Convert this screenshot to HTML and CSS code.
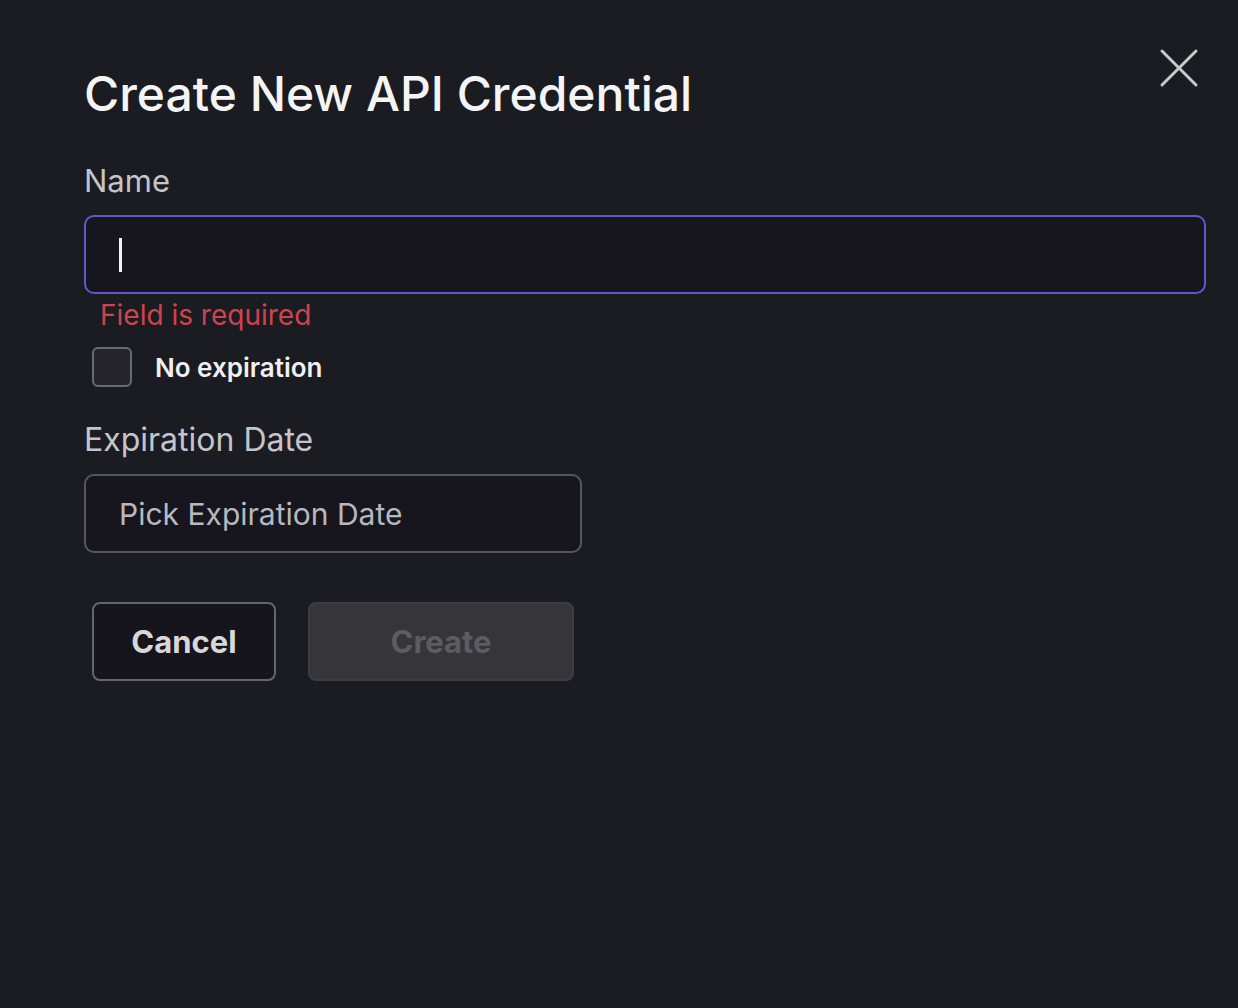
FILE: index.html
```html
<!DOCTYPE html>
<html>
<head>
<meta charset="utf-8">
<link rel="stylesheet" href="styles.css">
</head>
<body>
<div class="dialog">
  <button class="close" aria-label="Close">
    <svg width="40" height="40" viewBox="0 0 40 40"><path d="M3 3 L37 37 M37 3 L3 37" stroke="#c9c9cc" stroke-width="3" stroke-linecap="round" fill="none"/></svg>
  </button>
  <h1 class="title">Create New API Credential</h1>
  <div class="field">
    <label class="label">Name</label>
    <div class="input input-focus"><span class="caret"></span></div>
    <div class="error">Field is required</div>
  </div>
  <div class="check-row">
    <span class="checkbox"></span>
    <span class="check-label">No expiration</span>
  </div>
  <div class="field date-field">
    <label class="label">Expiration Date</label>
    <div class="input input-date"><span class="placeholder">Pick Expiration Date</span></div>
  </div>
  <div class="actions">
    <button class="btn btn-cancel">Cancel</button>
    <button class="btn btn-create">Create</button>
  </div>
</div>
</body>
</html>
```
FILE: styles.css
```css
* { box-sizing: border-box; }
html, body {
  margin: 0;
  padding: 0;
  width: 1238px;
  height: 1008px;
  overflow: hidden;
  background: #1b1b22;
  font-family: Inter, "Noto Sans", sans-serif;
  color: #e6e6e8;
}
.dialog {
  position: relative;
  padding: 64px 32px 0 84px;
}
.close {
  position: absolute;
  top: 48px;
  left: 1159px;
  width: 40px;
  height: 40px;
  padding: 0;
  border: none;
  background: transparent;
}
.close svg { display: block; }
.title {
  margin: 0;
  font-size: 48px;
  font-weight: 500;
  color: #f4f4f5;
  line-height: 60px;
  letter-spacing: 0;
}
.field {
  display: flex;
  flex-direction: column;
}
.label {
  margin-top: 37px;
  font-size: 31px;
  line-height: 40px;
  color: #c5c5c9;
}
.input {
  margin-top: 14px;
  height: 79px;
  border-radius: 10px;
  background: #17161e;
  display: flex;
  align-items: center;
  padding-left: 33px;
}
.input-focus {
  width: 1122px;
  border: 2px solid #5d5bcc;
}
.caret {
  display: block;
  width: 3px;
  height: 34px;
  background: #f2f2f2;
}
.error {
  margin-top: 3px;
  padding-left: 16px;
  font-size: 28px;
  line-height: 36px;
  color: #d0434c;
}
.check-row {
  display: flex;
  align-items: center;
  margin-top: 14px;
  padding-left: 8px;
}
.checkbox {
  width: 40px;
  height: 40px;
  border: 2px solid #6a6a70;
  border-radius: 6px;
  background: #25252b;
}
.check-label {
  margin-left: 23px;
  font-size: 26px;
  font-weight: 600;
  color: #f0f0f2;
}
.date-field .label { margin-top: 33px; font-size: 32px; }
.input-date {
  width: 498px;
  border: 2px solid #56565d;
}
.placeholder {
  font-size: 30px;
  color: #b8b8bd;
}
.actions {
  display: flex;
  gap: 32px;
  margin-top: 49px;
  padding-left: 8px;
}
.btn {
  height: 79px;
  border-radius: 8px;
  font-family: Inter, "Noto Sans", sans-serif;
  font-size: 31px;
  font-weight: 700;
  padding: 0;
}
.btn-cancel {
  width: 184px;
  border: 2px solid #65656c;
  background: #16151c;
  color: #d8d8db;
}
.btn-create {
  width: 266px;
  border: 2px solid #3d3d43;
  background: #35353a;
  color: #5c5c61;
}
```
